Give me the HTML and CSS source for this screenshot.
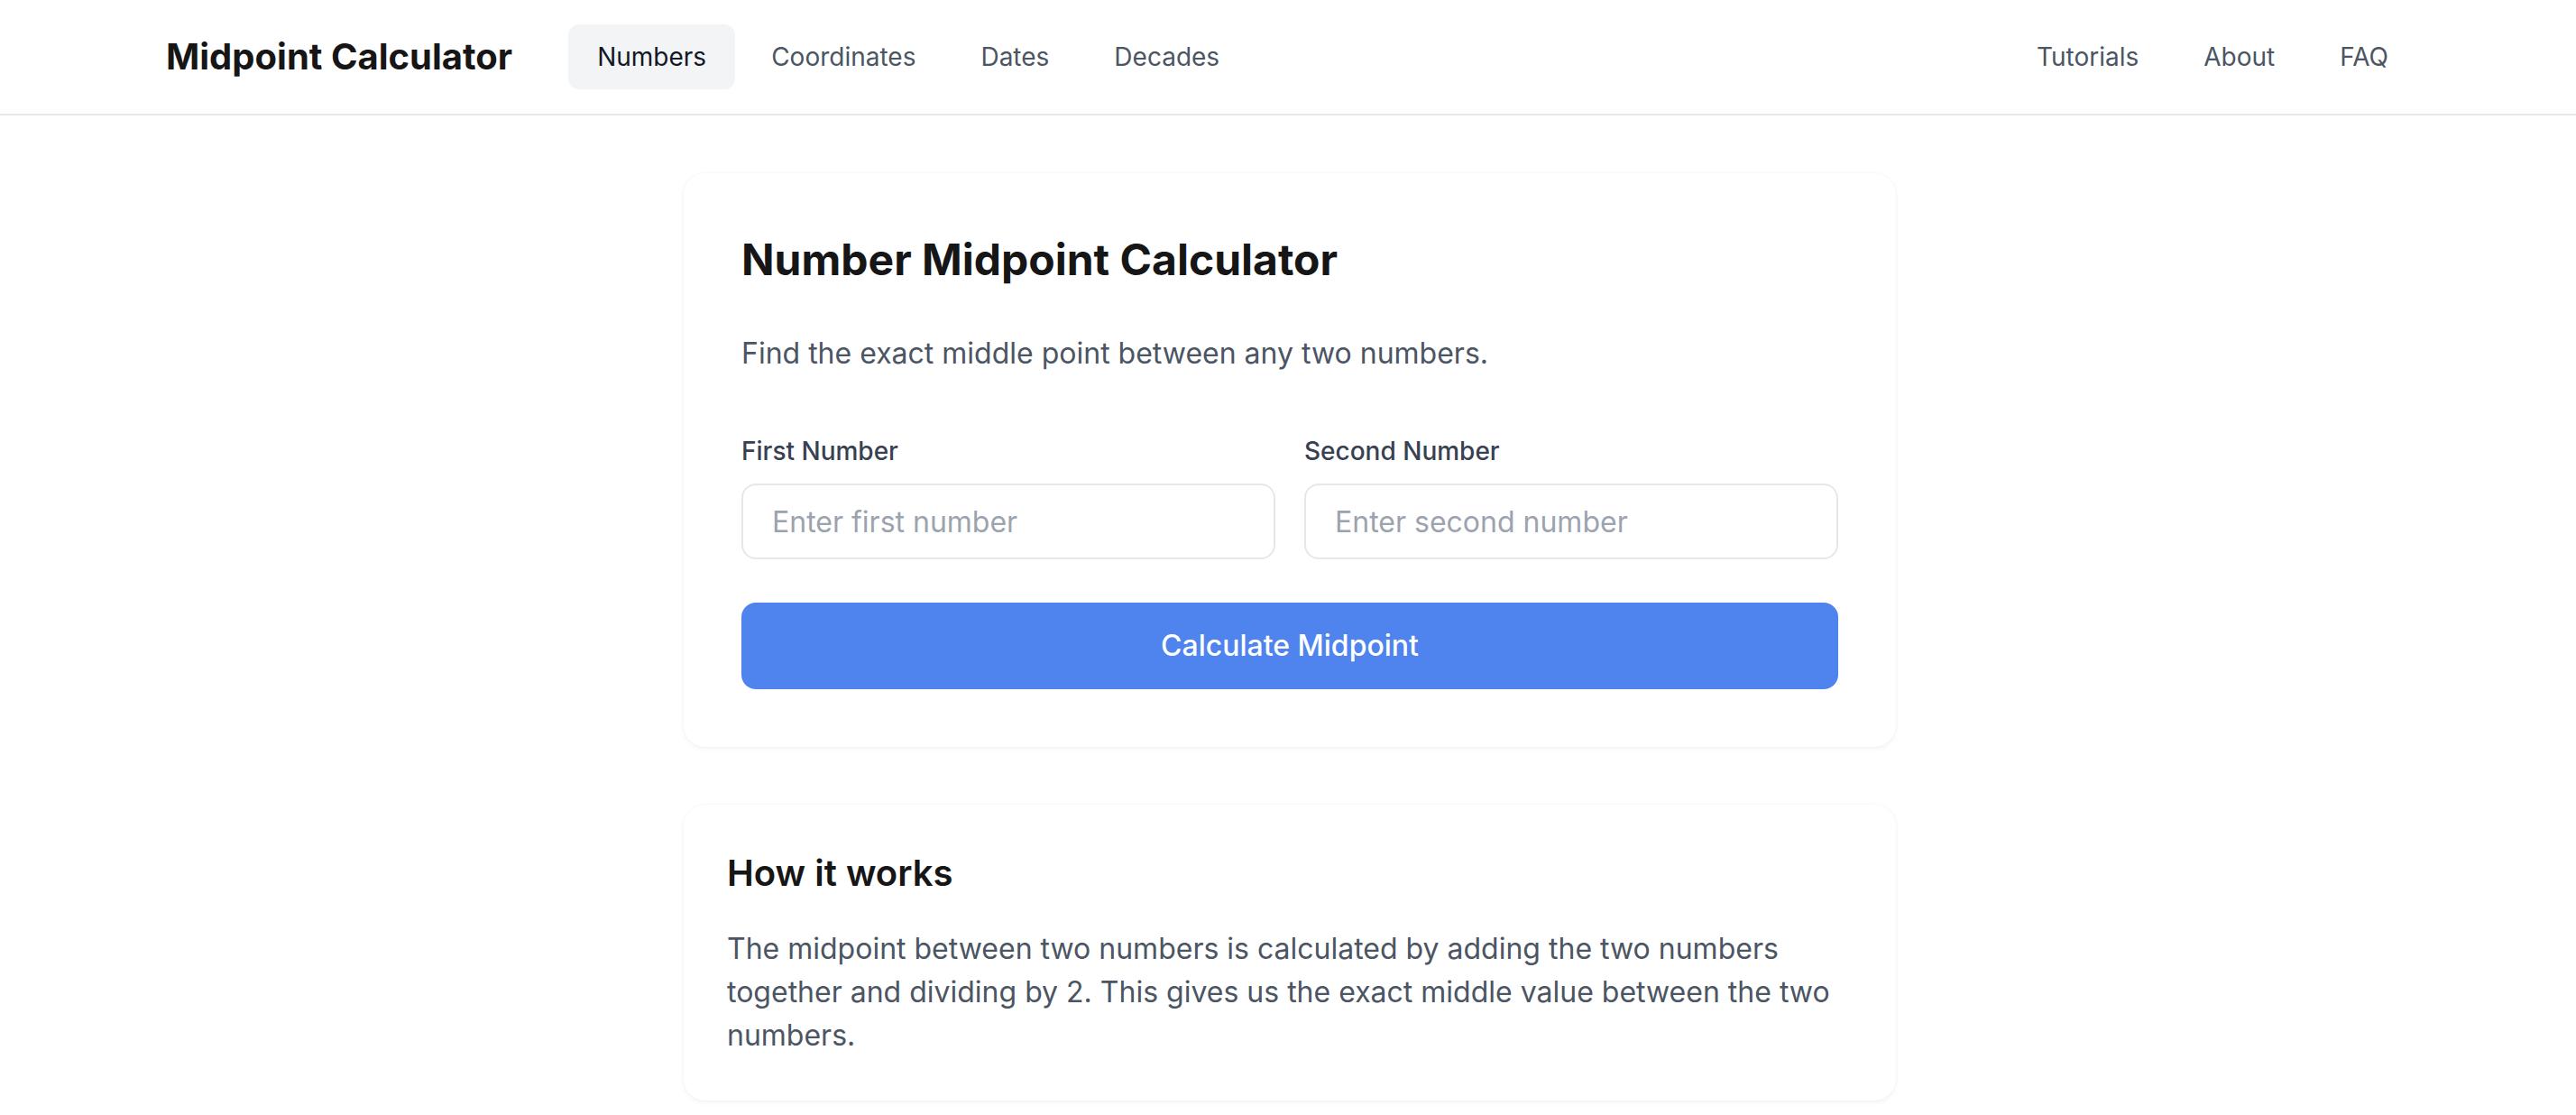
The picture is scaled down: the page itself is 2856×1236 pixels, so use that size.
FILE: index.html
```html
<!DOCTYPE html>
<html lang="en">
<head>
  <meta charset="UTF-8" />
  <meta name="viewport" content="width=device-width, initial-scale=1.0"/>
  <title>Midpoint Calculator</title>
  <link rel="stylesheet" href="styles.css">
</head>
<body>
  <header class="site-header">
    <div class="container header-inner">
      <div class="header-left">
        <a class="logo" href="#">Midpoint Calculator</a>
        <nav class="nav">
          <a class="nav-link active" href="#">Numbers</a>
          <a class="nav-link" href="#">Coordinates</a>
          <a class="nav-link" href="#">Dates</a>
          <a class="nav-link" href="#">Decades</a>
        </nav>
      </div>
      <nav class="nav">
        <a class="nav-link" href="#">Tutorials</a>
        <a class="nav-link" href="#">About</a>
        <a class="nav-link" href="#">FAQ</a>
      </nav>
    </div>
  </header>

  <main class="main">
    <section class="card calc-card">
      <h1>Number Midpoint Calculator</h1>
      <p class="lead">Find the exact middle point between any two numbers.</p>

      <form class="calc-form" onsubmit="return calculate(event)">
        <div class="fields">
          <div class="field">
            <label for="first">First Number</label>
            <input id="first" type="number" placeholder="Enter first number">
          </div>
          <div class="field">
            <label for="second">Second Number</label>
            <input id="second" type="number" placeholder="Enter second number">
          </div>
        </div>
        <button type="submit" class="btn-primary">Calculate Midpoint</button>
      </form>
    </section>

    <section class="card info-card">
      <h2>How it works</h2>
      <p>The midpoint between two numbers is calculated by adding the two numbers together and dividing by 2. This gives us the exact middle value between the two numbers.</p>
    </section>
  </main>

  <script>
    function calculate(e) {
      e.preventDefault();
      const a = parseFloat(document.getElementById('first').value);
      const b = parseFloat(document.getElementById('second').value);
      if (isNaN(a) || isNaN(b)) return false;
      alert(`Midpoint: ${(a + b) / 2}`);
      return false;
    }
  </script>
</body>
</html>
```

FILE: styles.css
```css
* {
  box-sizing: border-box;
}
body {
  font-family: Inter, 'Noto Sans', sans-serif;
  background: #ffffff;
  color: #111827;
  margin: 0;
}
a {
  text-decoration: none;
}
.container {
  max-width: 2568px;
  margin: 0 auto;
  padding: 0 32px 0 40px;
}
.site-header {
  height: 128px;
  background: #fff;
  border-bottom: 2px solid #e5e7eb;
}
.header-inner {
  height: 100%;
  display: flex;
  align-items: center;
  justify-content: space-between;
}
.header-left {
  display: flex;
  align-items: center;
}
.logo {
  font-size: 40px;
  line-height: 56px;
  font-weight: 700;
  color: #161616;
  margin-right: 62px;
}
.nav {
  display: flex;
  gap: 8px;
}
.nav-link {
  padding: 16px 32px;
  font-size: 28px;
  line-height: 40px;
  font-weight: 400;
  color: #4b5563;
  border-radius: 12px;
}
.nav-link.active {
  background: #f3f4f6;
  color: #111827;
}
.main {
  max-width: 1348px;
  margin: 0 auto;
  padding: 64px 0 64px 4px;
  display: flex;
  flex-direction: column;
  gap: 64px;
}
.card {
  background: #fff;
  border-radius: 24px;
  box-shadow: 0 2px 6px rgba(0, 0, 0, 0.05), 0 0 0 1px rgba(0, 0, 0, 0.015);
}
.calc-card {
  padding: 64px;
}
.calc-card h1 {
  margin: 0 0 48px;
  font-size: 48px;
  line-height: 64px;
  font-weight: 700;
  color: #161616;
}
.lead {
  margin: 0 0 64px;
  font-size: 32px;
  line-height: 48px;
  color: #4b5563;
}
.fields {
  display: grid;
  grid-template-columns: 1fr 1fr;
  gap: 32px;
}
.field label {
  display: block;
  margin-bottom: 16px;
  font-size: 28px;
  line-height: 40px;
  font-weight: 500;
  color: #374151;
}
.field input {
  width: 100%;
  height: 84px;
  padding: 16px 32px;
  font-family: inherit;
  font-size: 32px;
  color: #111827;
  border: 2px solid #e5e7eb;
  border-radius: 16px;
  outline: none;
}
.field input::placeholder {
  color: #9ca3af;
}
.btn-primary {
  display: block;
  width: 100%;
  margin-top: 48px;
  padding: 24px;
  font-family: inherit;
  font-size: 32px;
  line-height: 48px;
  font-weight: 500;
  color: #fff;
  background: #4f83ee;
  border: none;
  border-radius: 16px;
  cursor: pointer;
}
.info-card {
  padding: 48px;
}
.info-card h2 {
  margin: 0 0 32px;
  font-size: 40px;
  line-height: 56px;
  font-weight: 600;
  color: #161616;
}
.info-card p {
  margin: 0;
  font-size: 32px;
  line-height: 48px;
  color: #4b5563;
}
```
